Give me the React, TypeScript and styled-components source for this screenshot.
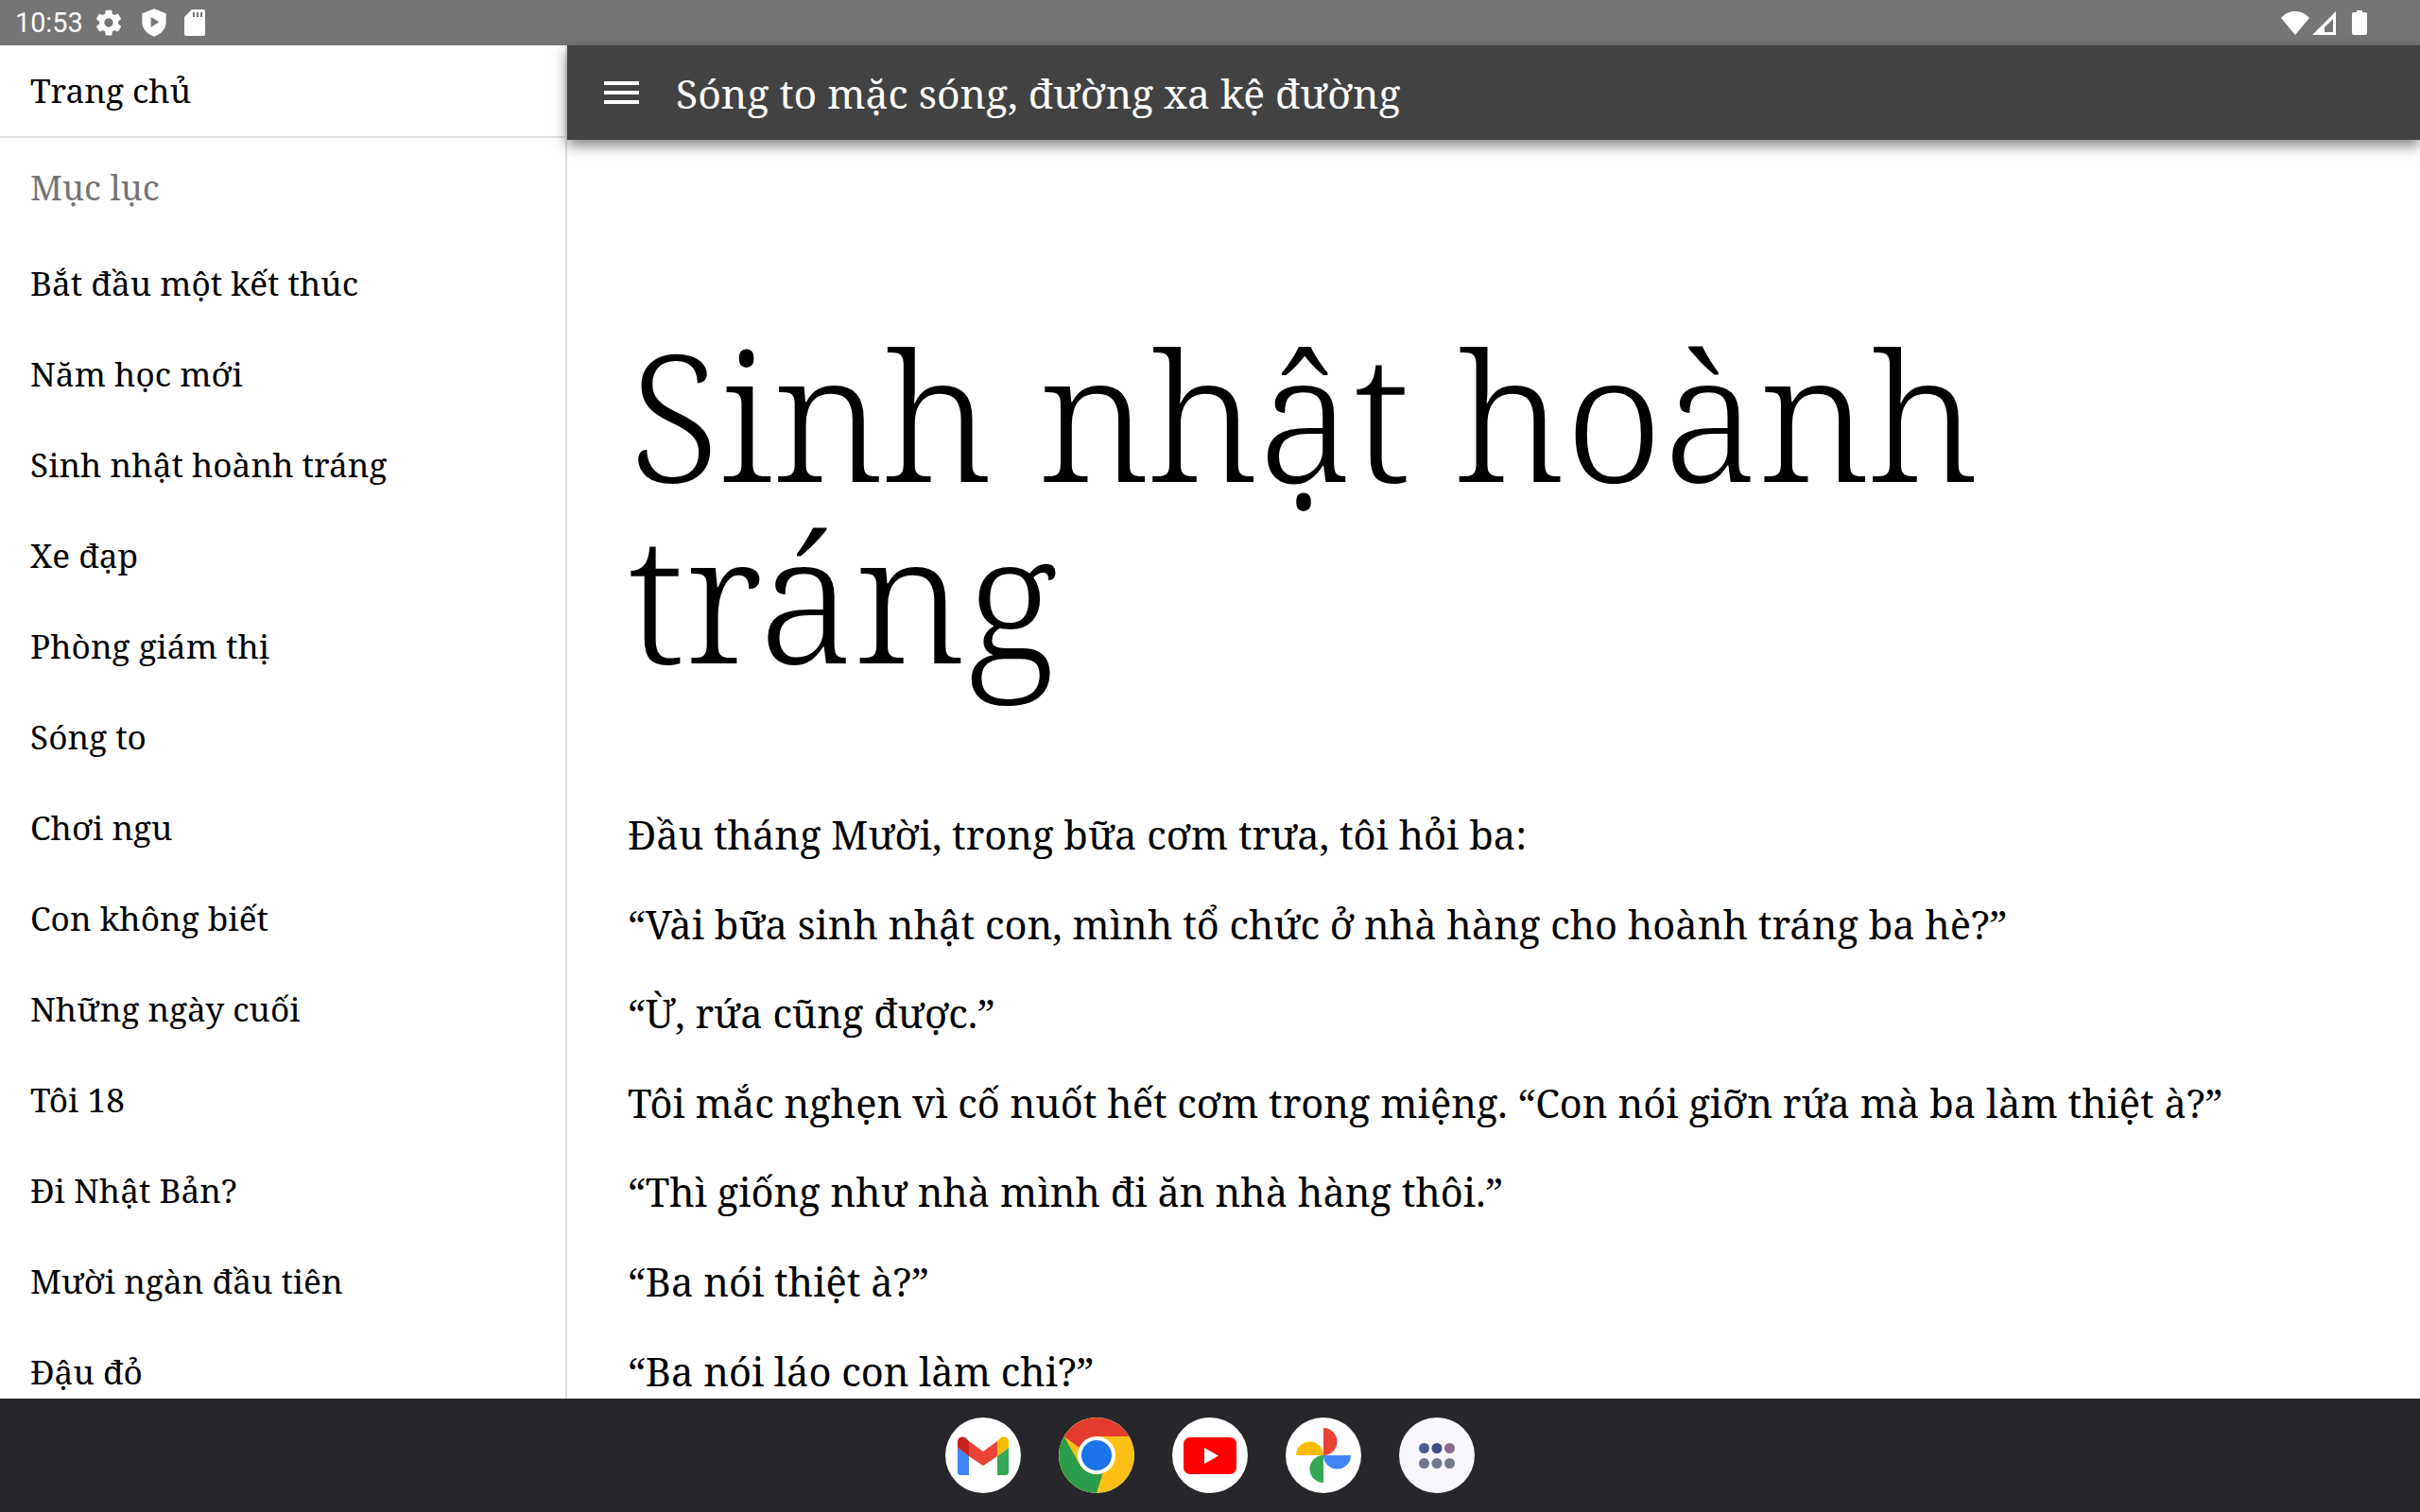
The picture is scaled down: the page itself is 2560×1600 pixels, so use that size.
import React from 'react';
import styled, { createGlobalStyle } from 'styled-components';

const Global = createGlobalStyle`
  html, body { margin: 0; padding: 0; width: 2560px; height: 1600px; overflow: hidden; background: #fff; }
`;
const SERIF = `"Noto Serif", "DejaVu Serif", serif`;

const Screen = styled.div`
  width: 2560px; height: 1600px; display: flex; flex-direction: column; overflow: hidden;
`;
const StatusBar = styled.div`
  height: 48px; flex: none; background: #757575; color: #fff; display: flex; align-items: center;
  justify-content: space-between; padding: 0 56px 0 16px; font-family: Roboto, sans-serif; font-size: 28.8px;
`;
const StatusLeft = styled.div`
  display: flex; align-items: center; gap: 16px;
`;
const StatusTime = styled.span`
  margin-right: -5px;
`;
const StatusRight = styled.div`
  display: flex; align-items: center; gap: 3px;
`;
const BatterySlot = styled.span`
  display: flex; margin-left: 14px;
`;
const Main = styled.div`
  flex: 1; min-height: 0; display: flex;
`;
const Sidebar = styled.nav`
  width: 600px; flex: none; border-right: 2px solid #e0e0e0; box-sizing: border-box; overflow: hidden;
  font-family: ${SERIF}; font-size: 35.2px; color: #000;
`;
const HomeRow = styled.div`
  height: 98px; box-sizing: border-box; border-bottom: 2px solid #e0e0e0; padding: 0 32px 2px;
  display: flex; align-items: center;
`;
const SidebarItem = styled.div`
  height: 96px; box-sizing: border-box; padding: 0 32px 2px; display: flex; align-items: center; white-space: nowrap; color: #000;
`;
const SidebarHeading = styled(SidebarItem)`
  color: #757575; margin: 5px 0; font-size: 36.3px;
`;
const Content = styled.div`
  flex: 1; min-width: 0; display: flex; flex-direction: column;
`;
const Header = styled.header`
  height: 100px; box-sizing: border-box; flex: none; background: #424242; color: #fff; display: flex; align-items: center;
  padding: 0 0 0 39px; gap: 39px; font-family: ${SERIF}; font-size: 42.7px;
  box-shadow: 0 6px 14px rgba(0,0,0,.5); position: relative;
`;
const Article = styled.article`
  flex: 1; min-height: 0; overflow: hidden; padding: 0 64px; font-family: ${SERIF}; color: #000;
`;
const Title = styled.h1`
  font-size: 186.4px; line-height: 192px; font-weight: 300; margin: 194px 0 127px;
`;
const Para = styled.p`
  font-size: 41.6px; line-height: 60px; margin: 0 0 34.6px; white-space: nowrap;
`;
const Dock = styled.div`
  height: 120px; flex: none; background: #26262b; display: flex; align-items: center; justify-content: center; gap: 40px;
`;
const DockIcon = styled.div<{ $bg?: string }>`
  width: 80px; height: 80px; border-radius: 50%; background: ${p => p.$bg || '#fff'}; overflow: hidden;
  display: flex; align-items: center; justify-content: center;
`;

const toc = ['Bắt đầu một kết thúc','Năm học mới','Sinh nhật hoành tráng','Xe đạp','Phòng giám thị','Sóng to','Chơi ngu','Con không biết','Những ngày cuối','Tôi 18','Đi Nhật Bản?','Mười ngàn đầu tiên','Đậu đỏ'];
const paras = ['Đầu tháng Mười, trong bữa cơm trưa, tôi hỏi ba:','“Vài bữa sinh nhật con, mình tổ chức ở nhà hàng cho hoành tráng ba hè?”','“Ừ, rứa cũng được.”','Tôi mắc nghẹn vì cố nuốt hết cơm trong miệng. “Con nói giỡn rứa mà ba làm thiệt à?”','“Thì giống như nhà mình đi ăn nhà hàng thôi.”','“Ba nói thiệt à?”','“Ba nói láo con làm chi?”'];

const Gear = () => (<svg width="32" height="32" viewBox="0 0 24 24" fill="#fff"><path d="M19.400 13c.04-.3.1-.7.1-1s-.06-.7-.1-1l2.100-1.700c.2-.15.25-.4.12-.64l-2-3.460c-.12-.22-.38-.3-.6-.22l-2.500 1c-.5-.4-1.070-.72-1.700-1L14.500 2.420c-.03-.24-.24-.42-.5-.42h-4c-.25 0-.46.18-.5.42L9.130 5c-.6.25-1.160.6-1.700 1l-2.500-1c-.2-.08-.47 0-.6.22l-2 3.460c-.13.22-.07.5.12.64L4.550 11c-.04.3-.07.66-.07 1s.03.7.07 1l-2.100 1.700c-.2.15-.25.4-.12.64l2 3.460c.12.22.38.3.6.22l2.500-1c.52.4 1.080.72 1.700 1l.37 2.650c.05.24.26.42.5.42h4c.26 0 .47-.18.5-.42l.38-2.650c.6-.25 1.170-.6 1.700-1l2.500 1c.22.08.48 0 .6-.22l2-3.460c.13-.22.07-.5-.12-.64L19.400 13zM12 15.500a3.500 3.500 0 1 1 0-7 3.500 3.500 0 0 1 0 7z"/></svg>);
const Shield = () => (<svg width="32" height="32" viewBox="0 0 24 24"><path fill="#fff" fillRule="evenodd" d="M12 1 2.500 4.600v6.900c0 5.600 4 9.800 9.500 11.500 5.500-1.700 9.500-5.900 9.500-11.500V4.600L12 1zM9.500 7.500v8l6.500-4-6.500-4z"/></svg>);
const Sd = () => (<svg width="22" height="28" viewBox="0 0 22 28"><path fill="#fff" fillRule="evenodd" d="M8 0h12a2 2 0 0 1 2 2v24a2 2 0 0 1-2 2H2a2 2 0 0 1-2-2V8zM9 3v5h2V3zm4 0v5h2V3zm4 0v5h2V3z"/></svg>);
const Wifi = () => (<svg width="30" height="25" viewBox="0 0 30 25"><path fill="#fff" d="M15 25 0 7C4 2.500 9 0 15 0s11 2.500 15 7z"/></svg>);
const Signal = () => (<svg width="25" height="25" viewBox="0 0 25 25"><path fill="#fff" fillRule="evenodd" d="M25 0v25H0zM22 8 13 17v5h9z"/></svg>);
const Battery = () => (<svg width="16" height="26" viewBox="0 0 16 26"><path fill="#fff" d="M5 0h6v2h3a2 2 0 0 1 2 2v20a2 2 0 0 1-2 2H2a2 2 0 0 1-2-2V4a2 2 0 0 1 2-2h3z"/></svg>);
const Menu = () => (<svg width="37" height="24" viewBox="0 0 37 24" fill="#fff"><rect width="37" height="4" y="0"/><rect width="37" height="4" y="10"/><rect width="37" height="4" y="20"/></svg>);
const Gmail = () => (<svg width="54" height="41" viewBox="0 0 54 41"><path fill="#4285f4" d="M0 12 12 21V41H3a3 3 0 0 1-3-3z"/><path fill="#34a853" d="M54 12 42 21V41h9a3 3 0 0 0 3-3z"/><path fill="#ea4335" d="M12 5 27 16 42 5V21L27 31 12 21z"/><path fill="#c5221f" d="M0 12V6C0 1 5-1 9 2l3 3V21z"/><path fill="#fbbc04" d="M42 5l3-3c4-3 9-1 9 4v6L42 21z"/></svg>);
const Chrome = () => (<svg width="80" height="80" viewBox="0 0 80 80"><circle cx="40" cy="40" r="40" fill="#fcc014"/><path fill="#e33b2e" d="M5.500 20A40 40 0 0 1 74.600 20H40a20 20 0 0 0-18 12z"/><path fill="#2a9d4a" d="M5.500 20 22.500 50a20 20 0 0 0 24 9L40 80A40 40 0 0 1 5.500 20z"/><circle cx="40" cy="40" r="20" fill="#fff"/><circle cx="40" cy="40" r="16" fill="#1a73e8"/></svg>);
const Youtube = () => (<svg width="56" height="39" viewBox="0 0 56 39"><rect width="56" height="39" rx="7" fill="#f00"/><path fill="#fff" d="M22 11v17l15-8.500z"/></svg>);
const Photos = () => (<svg width="58" height="58" viewBox="0 0 58 58"><path fill="#ea4335" d="M29 29V0a14.500 14.500 0 0 1 0 29z"/><path fill="#4285f4" d="M29 29h29a14.500 14.500 0 0 1-29 0z"/><path fill="#34a853" d="M29 29v29a14.500 14.500 0 0 1 0-29z"/><path fill="#fbbc04" d="M29 29H0a14.500 14.500 0 0 1 29 0z"/></svg>);
const dots: [string, number, number][] = [['#4a5d95',5.500,5.500],['#3b4b89',19,5.500],['#8b6a8c',32.500,5.500],['#73778f',5.500,21.500],['#73778f',19,21.500],['#73778f',32.500,21.500]];
const Apps = () => (<svg width="38" height="27" viewBox="0 0 38 27">{dots.map(([c,x,y]) => <circle key={`${x}-${y}`} cx={x} cy={y} r="5.500" fill={c}/>)}</svg>);

export default function App() {
  return (
    <Screen>
      <Global />
      <StatusBar>
        <StatusLeft><StatusTime>10:53</StatusTime><Gear /><Shield /><Sd /></StatusLeft>
        <StatusRight><Wifi /><Signal /><BatterySlot><Battery /></BatterySlot></StatusRight>
      </StatusBar>
      <Main>
        <Sidebar>
          <HomeRow>Trang chủ</HomeRow>
          <SidebarHeading>Mục lục</SidebarHeading>
          {toc.map(t => <SidebarItem key={t}>{t}</SidebarItem>)}
        </Sidebar>
        <Content>
          <Header><Menu /><span>Sóng to mặc sóng, đường xa kệ đường</span></Header>
          <Article>
            <Title>Sinh nhật hoành tráng</Title>
            {paras.map(p => <Para key={p}>{p}</Para>)}
          </Article>
        </Content>
      </Main>
      <Dock>
        <DockIcon><Gmail /></DockIcon>
        <DockIcon><Chrome /></DockIcon>
        <DockIcon><Youtube /></DockIcon>
        <DockIcon><Photos /></DockIcon>
        <DockIcon $bg="#f8f6fc"><Apps /></DockIcon>
      </Dock>
    </Screen>
  );
}
